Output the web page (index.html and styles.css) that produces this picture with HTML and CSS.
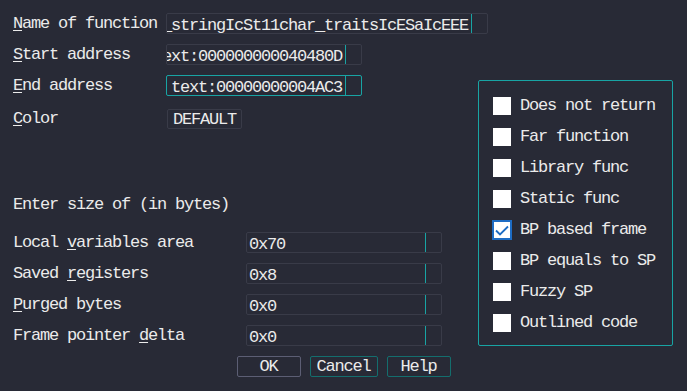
FILE: index.html
```
<!DOCTYPE html>
<html>
<head>
<meta charset="utf-8">
<link rel="stylesheet" href="styles.css">
</head>
<body>
<div class="dialog">
  <div class="row">
    <label class="lbl lbl-top"><u>N</u>ame of function</label>
    <div class="field field-name"><div class="txt"><span class="scrolled">_stringIcSt11char_traitsIcESaIcEEE</span></div><div class="sep"></div></div>
  </div>
  <div class="main">
    <div class="left">
      <div class="row">
        <label class="lbl lbl-top"><u>S</u>tart address</label>
        <div class="field field-addr"><div class="txt"><span class="scrolled">ext:000000000040480D</span></div><div class="sep"></div></div>
      </div>
      <div class="row">
        <label class="lbl lbl-top"><u>E</u>nd address</label>
        <div class="field field-addr focused"><div class="txt pad">text:00000000004AC3</div><div class="sep"></div></div>
      </div>
      <div class="row row-color">
        <label class="lbl lbl-top"><u>C</u>olor</label>
        <div class="color-btn">DEFAULT</div>
      </div>
      <div class="section">Enter size of (in bytes)</div>
      <div class="sizes">
        <div class="row">
          <label class="lbl lbl-bot">Local <u>v</u>ariables area</label>
          <div class="field field-size"><div class="txt pad">0x70</div><div class="sep"></div></div>
        </div>
        <div class="row">
          <label class="lbl lbl-bot">Saved <u>r</u>egisters</label>
          <div class="field field-size"><div class="txt pad">0x8</div><div class="sep"></div></div>
        </div>
        <div class="row">
          <label class="lbl lbl-bot"><u>P</u>urged bytes</label>
          <div class="field field-size"><div class="txt pad">0x0</div><div class="sep"></div></div>
        </div>
        <div class="row">
          <label class="lbl lbl-bot">Frame pointer <u>d</u>elta</label>
          <div class="field field-size"><div class="txt pad">0x0</div><div class="sep"></div></div>
        </div>
      </div>
    </div>
    <div class="group">
      <div class="check"><span class="box"></span><span>Does not return</span></div>
      <div class="check"><span class="box"></span><span>Far function</span></div>
      <div class="check"><span class="box"></span><span>Library func</span></div>
      <div class="check"><span class="box"></span><span>Static func</span></div>
      <div class="check"><span class="box checked"><svg width="16" height="16" viewBox="0 0 16 16"><path d="M2 8.5 L6 12.5 L14 4.5" fill="none" stroke="#1d6cc4" stroke-width="1.8"/></svg></span><span>BP based frame</span></div>
      <div class="check"><span class="box"></span><span>BP equals to SP</span></div>
      <div class="check"><span class="box"></span><span>Fuzzy SP</span></div>
      <div class="check"><span class="box"></span><span>Outlined code</span></div>
    </div>
  </div>
  <div class="buttons">
    <div class="btn btn-ok">OK</div>
    <div class="btn btn-teal btn-cancel">Cancel</div>
    <div class="btn btn-teal btn-help">Help</div>
  </div>
</div>
</body>
</html>
```
FILE: styles.css
```
html, body {
  margin: 0;
  padding: 0;
}
body {
  background: #282a36;
  width: 687px;
  height: 391px;
  overflow: hidden;
  font-family: "Liberation Mono", monospace;
  font-size: 17px;
  letter-spacing: -1.2px;
  color: #ebebeb;
}
.dialog {
  display: flex;
  flex-direction: column;
  padding: 13px 0 0 13px;
}
.row {
  display: flex;
  align-items: flex-start;
  height: 21px;
  line-height: 21px;
}
.lbl {
  flex: none;
  white-space: nowrap;
}
.lbl u {
  text-decoration: underline;
  text-underline-offset: 2px;
  text-decoration-thickness: 1px;
}
.lbl-top { width: 153px; }
.lbl-bot { width: 233px; }
.field {
  display: flex;
  height: 21px;
  box-sizing: border-box;
  border: 1px solid #393b48;
  border-radius: 2px;
  overflow: hidden;
}
.field .txt {
  flex: 1;
  overflow: hidden;
  white-space: nowrap;
  line-height: 21px;
  padding-top: 1px;
}
.field .txt.pad { padding-left: 4px; }
.field .scrolled {
  display: inline-block;
  margin-left: -5px;
}
.field .sep {
  flex: none;
  width: 15px;
  border-left: 1px solid #18a4a4;
}
.field-name { width: 322px; }
.field-addr { width: 196px; }
.field-size { width: 196px; }
.field-size .txt.pad { padding-left: 2px; }
.focused { border-color: #18a4a4; }
.main {
  display: flex;
  margin-top: 10px;
}
.left {
  width: 465px;
  display: flex;
  flex-direction: column;
  gap: 10px;
}
.row-color {
  height: 22px;
  line-height: 22px;
  margin-top: 2px;
}
.color-btn {
  margin-top: 1px;
  margin-left: 1px;
  width: 75px;
  height: 20px;
  line-height: 20px;
  box-sizing: border-box;
  border: 1px solid #393b48;
  border-radius: 2px;
  text-align: center;
}
.section {
  margin-top: 54px;
  height: 21px;
  line-height: 21px;
}
.sizes {
  margin-top: 7px;
  display: flex;
  flex-direction: column;
  gap: 10px;
}
.group {
  margin-top: 36px;
  width: 195px;
  height: 266px;
  box-sizing: border-box;
  border: 1px solid #18a4a4;
  border-radius: 2px;
  padding: 14px 0 0 14px;
  display: flex;
  flex-direction: column;
  gap: 10px;
}
.check {
  display: flex;
  align-items: center;
  height: 21px;
  line-height: 21px;
  white-space: nowrap;
}
.box {
  flex: none;
  width: 18px;
  height: 18px;
  box-sizing: border-box;
  background: #ffffff;
  margin-right: 9px;
  display: flex;
  align-items: center;
  justify-content: center;
}
.box.checked {
  border: 1px solid #1d6cc4;
  box-shadow: 0 0 0 1px #1d6cc4;
}
.buttons {
  display: flex;
  justify-content: center;
  gap: 9px;
  margin-top: 10px;
  margin-left: -13px;
}
.btn {
  height: 21px;
  line-height: 20px;
  box-sizing: border-box;
  border: 1px solid #5c5e74;
  border-radius: 2px;
  text-align: center;
}
.btn-ok { width: 64px; }
.btn-cancel { width: 68px; }
.btn-help { width: 64px; }
.btn-teal { border-color: #146e6e; }
```
